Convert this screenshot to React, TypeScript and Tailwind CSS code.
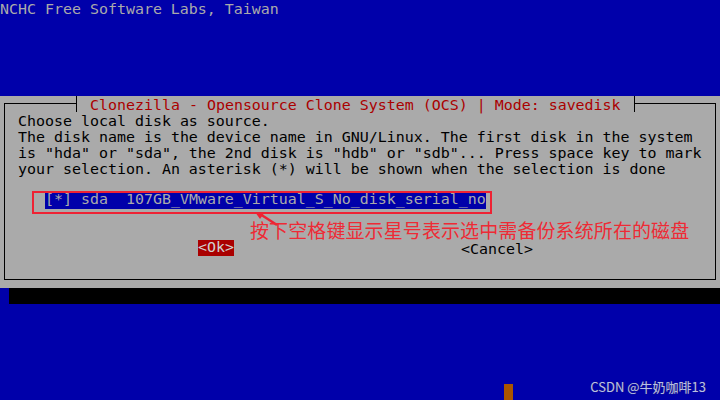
const body_lines = [
  "Choose local disk as source.",
  "The disk name is the device name in GNU/Linux. The first disk in the system",
  'is "hda" or "sda", the 2nd disk is "hdb" or "sdb"... Press space key to mark',
  "your selection. An asterisk (*) will be shown when the selection is done",
];

const title = " Clonezilla - Opensource Clone System (OCS) | Mode: savedisk ";

export default function App() {
  return (
    <div className="relative w-[720px] h-[400px] overflow-hidden bg-[#0000aa] font-['DejaVu_Sans_Mono',monospace] text-[14.95px] leading-[16px] whitespace-pre">
      {/* header */}
      <div className="h-[16px] pt-[2px] leading-[14px] text-[#aaaaaa]">NCHC Free Software Labs, Taiwan</div>
      <div className="h-[80px]" />

      {/* dialog */}
      <div className="relative h-[192px] bg-[#aaaaaa] pt-[7px] px-[4px]">
        <div className="h-[177px] border-x border-b border-black flex flex-col">
          <div className="h-[16px] -mt-[7px] flex shrink-0">
            <div className="w-[71px] h-0 mt-[7px] border-t border-black" />
            <div className="w-px bg-black" />
            <div className="w-[4px]" />
            <div className="text-[#aa0000] pt-[2px] leading-[14px]">{title}</div>
            <div className="w-[4px]" />
            <div className="w-px bg-black" />
            <div className="flex-1 h-0 mt-[7px] border-t border-black" />
          </div>
          <div className="pl-[13px] text-black">
            {body_lines.map((line, i) => (
              <div key={i} className="h-[16px] pt-[2px] leading-[14px]">{line}</div>
            ))}
            <div className="h-[16px]" />
            <div className="h-[16px] pl-[27px] flex">
              <span className="mt-px h-[16px] leading-[13px] bg-[#0000aa] text-[#aaaaaa]">[*] sda  107GB_VMware_Virtual_S_No_disk_serial_no</span>
            </div>
            <div className="h-[16px]" />
            <div className="h-[16px]" />
            <div className="h-[16px] flex">
              <span className="ml-[180px] h-[16px] leading-[15px] bg-[#aa0000] text-[#d0d0d0]">&lt;Ok&gt;</span>
              <span className="ml-[227px] pt-[2px] leading-[14px] text-black">&lt;Cancel&gt;</span>
            </div>
          </div>
        </div>

        {/* annotation */}
        <div className="absolute left-[32px] top-[95px] w-[460px] h-[23px] border-2 border-[#ee2233]" />
        <svg className="absolute left-[250px] top-[112px]" width="40" height="24" viewBox="0 0 40 24">
          <path d="M27 17 L10 6" stroke="#ee2233" strokeWidth="2.5" fill="none" />
          <path d="M5 4 L15 4 L10 11 Z" fill="#ee2233" />
        </svg>
        <div className="absolute left-[250px] top-[125px] text-[19px] leading-[18px] tracking-[0.1px] text-[#ee2a35] font-['Noto_Sans_CJK_SC',sans-serif]">
          按下空格键显示星号表示选中需备份系统所在的磁盘
        </div>
      </div>

      {/* shadow */}
      <div className="h-[16px] flex">
        <div className="w-[9px]" />
        <div className="flex-1 bg-black" />
      </div>

      {/* rest of screen */}
      <div className="h-[80px]" />
      <div className="h-[16px] flex">
        <div className="w-[504px]" />
        <div className="w-[9px] bg-[#aa5500]" />
      </div>

      <div className="absolute right-[14px] bottom-[6px] text-[13px] leading-[14px] text-[#b8bfe8] font-['Noto_Sans_CJK_SC',sans-serif] [text-shadow:0_0_1px_#445]">
        CSDN @牛奶咖啡13
      </div>
    </div>
  );
}
